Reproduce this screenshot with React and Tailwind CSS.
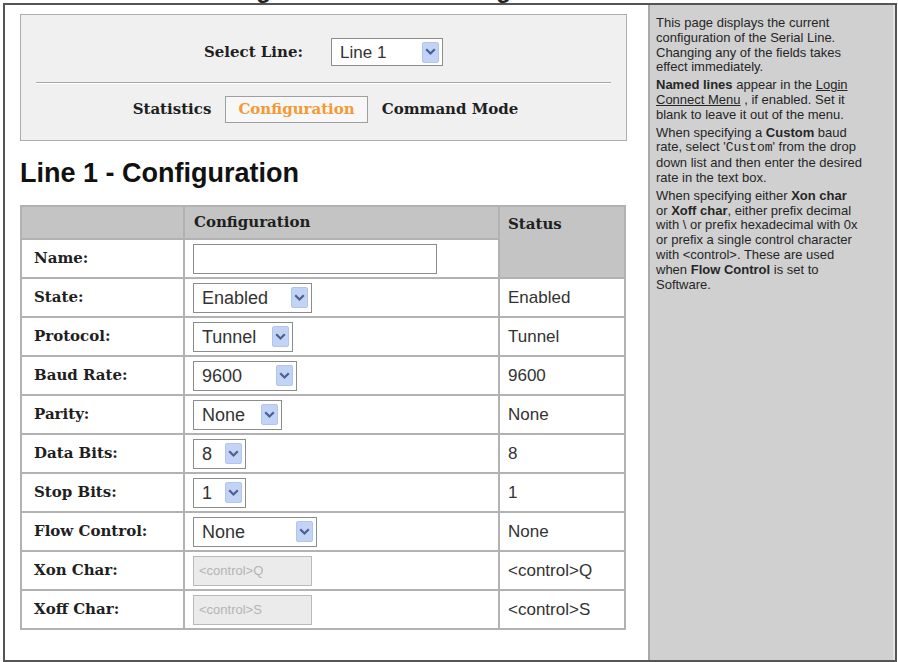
import React from 'react'

const Chevron = () => (
  <span className="flex items-center justify-center w-[17px] h-[21px] bg-[#c3d3f5] border border-[#b3c5ee] rounded-[2px]">
    <svg width="11" height="8" viewBox="0 0 11 8">
      <path d="M2 2 L5.5 5.5 L9 2" fill="none" stroke="#4b6192" strokeWidth="2.2" strokeLinecap="square" />
    </svg>
  </span>
)

const Dropdown = ({ value, className, text = 'text-[18px]' }) => (
  <div className={`flex items-center border border-[#8c8c8c] bg-white pl-[8px] pr-[3px] ${className}`}>
    <span className={`flex-1 ${text} text-[#333] leading-none`}>{value}</span>
    <Chevron />
  </div>
)

const rows = [
  { label: 'State:', status: 'Enabled', field: <Dropdown value="Enabled" className="w-[119px] h-[30px]" /> },
  { label: 'Protocol:', status: 'Tunnel', field: <Dropdown value="Tunnel" className="w-[100px] h-[30px]" /> },
  { label: 'Baud Rate:', status: '9600', field: <Dropdown value="9600" className="w-[104px] h-[30px]" /> },
  { label: 'Parity:', status: 'None', field: <Dropdown value="None" className="w-[89px] h-[30px]" /> },
  { label: 'Data Bits:', status: '8', field: <Dropdown value="8" className="w-[53px] h-[30px]" /> },
  { label: 'Stop Bits:', status: '1', field: <Dropdown value="1" className="w-[53px] h-[30px]" /> },
  { label: 'Flow Control:', status: 'None', field: <Dropdown value="None" className="w-[124px] h-[30px]" /> },
  {
    label: 'Xon Char:',
    status: '<control>Q',
    field: (
      <div className="flex items-center w-[119px] h-[30px] border border-[#b9b9b9] bg-[#ebebeb] pl-[5px] text-[13px] text-[#b4b4b4]">
        {'<control>Q'}
      </div>
    ),
  },
  {
    label: 'Xoff Char:',
    status: '<control>S',
    field: (
      <div className="flex items-center w-[119px] h-[30px] border border-[#b9b9b9] bg-[#ebebeb] pl-[5px] text-[13px] text-[#b4b4b4]">
        {'<control>S'}
      </div>
    ),
  },
]

const serif = "font-['DejaVu_Serif',serif] font-bold text-[15px] text-[#1f1f1f]"

export default function App() {
  return (
    <div className="w-[898px] h-[662px] bg-white overflow-hidden font-['Liberation_Sans',Arial,sans-serif]">
      {/* page title, mostly above the visible area */}
      <div className="h-[3px] overflow-hidden pl-[67px]">
        <div className="-mt-[22px] text-[24px] leading-[24px] font-bold text-[#222] whitespace-nowrap">
          Serial Line Configuration - Line Settings
        </div>
      </div>

      <div className="ml-[3px] w-[894px] h-[659px] border-2 border-[#555] flex">
        {/* main area */}
        <div className="w-[643px] pl-[15px] pt-[9px]">
          <div className="w-[607px] h-[127px] border border-[#adadad] bg-[#f0f0f0] flex flex-col items-center pt-[23px]">
            <div className="flex items-center gap-[28px]">
              <span className={serif}>Select Line:</span>
              <Dropdown value="Line 1" className="w-[112px] h-[28px]" text="text-[17px]" />
            </div>
            <div className="w-[575px] mt-[16px] border-t border-[#a6a6a6] border-b border-b-white" />
            <div className="flex items-center gap-[14px] mt-[12px] pl-[4px]">
              <span className={serif}>Statistics</span>
              <span className="h-[27px] px-[12px] flex items-center border border-[#9f9f9f] bg-[#f7f7f7] font-['DejaVu_Serif',serif] font-bold text-[15px] text-[#f29a36]">
                Configuration
              </span>
              <span className={serif}>Command Mode</span>
            </div>
          </div>

          <h1 className="mt-[19px] text-[27px] leading-[27px] font-bold text-[#111]">Line 1 - Configuration</h1>

          <table className="mt-[18px] border-separate border-spacing-[2px] bg-[#b2b2b2] w-[606px]">
            <tbody>
              <tr className="h-[31px]">
                <td className="bg-[#c4c4c4] w-[161px]" />
                <td className={`bg-[#c4c4c4] w-[313px] pl-[9px] ${serif}`}>Configuration</td>
                <td rowSpan={2} className={`bg-[#c4c4c4] align-top pl-[8px] pt-[6px] ${serif}`}>Status</td>
              </tr>
              <tr className="h-[37px]">
                <td className={`bg-white pl-[12px] ${serif}`}>Name:</td>
                <td className="bg-white pl-[8px]">
                  <div className="w-[244px] h-[30px] border border-[#8c8c8c] bg-white" />
                </td>
              </tr>
              {rows.map((r) => (
                <tr key={r.label} className="h-[37px]">
                  <td className={`bg-white pl-[12px] ${serif}`}>{r.label}</td>
                  <td className="bg-white pl-[8px]">{r.field}</td>
                  <td className="bg-white pl-[8px] text-[17px] text-[#333]">{r.status}</td>
                </tr>
              ))}
            </tbody>
          </table>
        </div>

        {/* help sidebar */}
        <div className="flex-1 bg-[#d0d0d0] border-l-2 border-[#a9a9a9] border-r-2 border-r-[#e3e3e3] pl-[6px] pt-[11px] text-[13px] leading-[14.8px] text-[#262626] whitespace-nowrap">
          <p className="mb-[3px]">
            This page displays the current<br />
            configuration of the Serial Line.<br />
            Changing any of the fields takes<br />
            effect immediately.
          </p>
          <p className="mb-[3px]">
            <b>Named lines</b> appear in the <span className="underline">Login</span><br />
            <span className="underline">Connect Menu</span> , if enabled. Set it<br />
            blank to leave it out of the menu.
          </p>
          <p className="mb-[3px]">
            When specifying a <b>Custom</b> baud<br />
            rate, select '<span className="font-['Liberation_Mono',monospace]">Custom</span>' from the drop<br />
            down list and then enter the desired<br />
            rate in the text box.
          </p>
          <p>
            When specifying either <b>Xon char</b><br />
            or <b>Xoff char</b>, either prefix decimal<br />
            with \ or prefix hexadecimal with 0x<br />
            or prefix a single control character<br />
            with {'<control>'}. These are used<br />
            when <b>Flow Control</b> is set to<br />
            Software.
          </p>
        </div>
      </div>
    </div>
  )
}
